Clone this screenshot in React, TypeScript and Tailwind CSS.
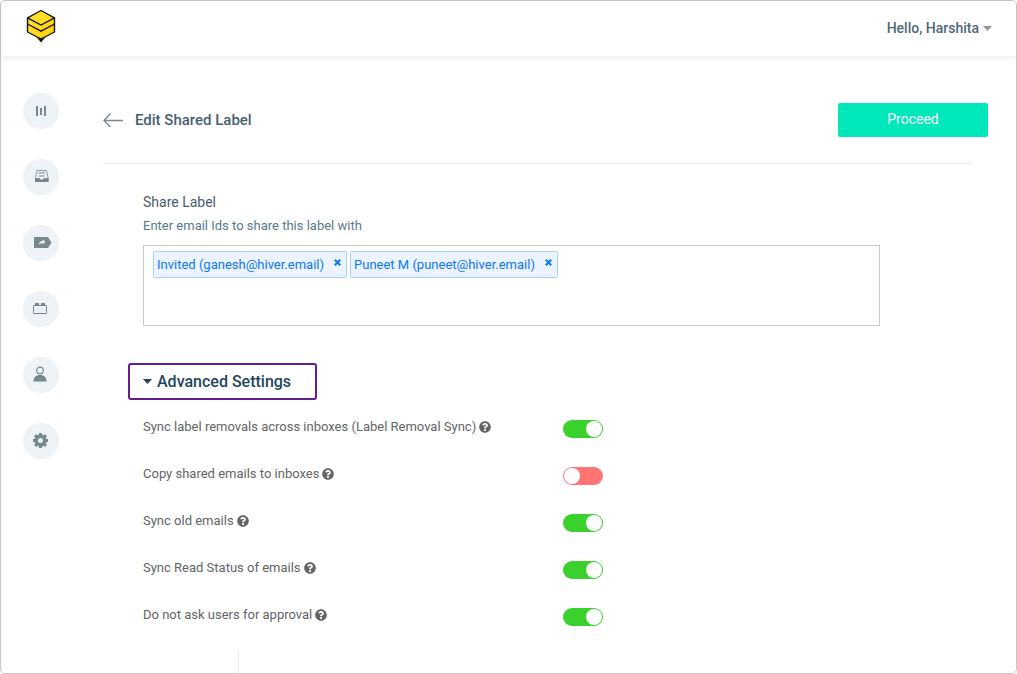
import { useState } from "react";
import type { ReactNode } from "react";
import { FaQuestionCircle } from "react-icons/fa";

const NAV: { label: string; icon: ReactNode }[] = [
  {
    label: "Analytics",
    icon: (
      <path d="M3 4h2v10H3zM7 6h2v7H7zM11 4h2v10h-2z" />
    ),
  },
  {
    label: "Shared mailboxes",
    icon: (
      <>
        <path d="M4 2.500h9.500l1.500 7v4H2.500v-4z" fill="none" stroke="currentColor" strokeWidth="0.800" />
        <path d="M2 10h4.500l1 1.500h2.500l1-1.500h4.500v4H2z" />
        <path d="M5.500 4.500h6.500v1H5.500zM6 7.500h5.500v1H6z" />
      </>
    ),
  },
  {
    label: "Shared labels",
    icon: (
      <>
        <path d="M1 3h14l3.500 5.500L15 14H1z" />
        <path d="M6 11c0-3 1.500-4 3.500-4V5.500L12.500 8l-3 2.500V9C8 9 7 9.500 6 11z" fill="#edf3f6" />
      </>
    ),
  },
  {
    label: "Integrations",
    icon: (
      <>
        <rect x="0.500" y="5.500" width="13" height="8" rx="0.500" fill="none" stroke="currentColor" />
        <path d="M2 3h4v2.500H2zM8 3h4v2.500H8z" />
      </>
    ),
  },
  {
    label: "Users",
    icon: (
      <>
        <circle cx="7" cy="4.500" r="3.300" fill="none" stroke="currentColor" strokeWidth="1.200" />
        <path d="M.5 15.500c0-4 2.500-6.500 6.500-6.500s6.500 2.500 6.500 6.500z" />
      </>
    ),
  },
  {
    label: "Settings",
    icon: (
      <path
        fillRule="evenodd"
        d="M6.100 1h2.800l.4 1.900 1 .4L12 2.200l1.900 1.900-1.100 1.700.4 1 1.800.3v2.800l-1.800.4-.4 1 1.100 1.600-1.900 2-1.700-1.100-1 .4-.4 1.800H6.100l-.4-1.800-1-.4L3 14.900l-1.900-2 1.100-1.600-.4-1L0 9.900V7.100l1.800-.3.4-1L1.100 4.100 3 2.200l1.700 1.100 1-.4zM7.500 6a2.500 2.500 0 1 0 0 5 2.500 2.500 0 0 0 0-5z"
      />
    ),
  },
];

const SETTINGS = [
  { id: "removal", label: "Sync label removals across inboxes (Label Removal Sync)", on: true },
  { id: "copy", label: "Copy shared emails to inboxes", on: false },
  { id: "old", label: "Sync old emails", on: true },
  { id: "read", label: "Sync Read Status of emails", on: true },
  { id: "approval", label: "Do not ask users for approval", on: true },
];

function Logo() {
  return (
    <svg width="30" height="34" viewBox="0 0 30 34">
      <defs>
        <linearGradient id="honey" x1="0" y1="0" x2="1" y2="1">
          <stop offset="0" stopColor="#ffe53b" />
          <stop offset="1" stopColor="#ffd000" />
        </linearGradient>
      </defs>
      <path d="M10 27.500l5 6 5-6z" fill="#151515" />
      <path
        d="M15 1.500l13.500 7.300v14.200L15 30 1.500 23V8.800z"
        fill="url(#honey)"
        stroke="#151515"
        strokeWidth="1.400"
        strokeLinejoin="round"
      />
      <path
        d="M1.500 8.800L15 16l13.500-7.200M1.500 15L15 22.200l13.500-7.200"
        fill="none"
        stroke="#151515"
        strokeWidth="1.400"
      />
    </svg>
  );
}

function Caret({ className }: { className?: string }) {
  return (
    <svg width="9" height="5" viewBox="0 0 9 5" fill="currentColor" className={className}>
      <path d="M0 0h9L4.500 5z" />
    </svg>
  );
}

function Header() {
  return (
    <header className="flex h-[55px] items-center justify-between pb-0.5 pl-[25px] pr-6 shadow-[0_2px_6px_rgba(0,0,0,0.08)]">
      <a href="#" aria-label="Home" className="mb-1">
        <Logo />
      </a>
      <button className="flex items-center gap-1 text-sm font-medium text-[#4f6878]">
        Hello, Harshita
        <Caret className="mt-0.5 text-[#90979b]" />
      </button>
    </header>
  );
}

function Sidebar() {
  return (
    <nav className="flex flex-col gap-[30px] pl-[22px] pt-[37px]">
      {NAV.map((item) => (
        <a
          key={item.label}
          href="#"
          aria-label={item.label}
          className="flex size-9 items-center justify-center rounded-full bg-[#edf3f6] text-[#78888f]"
        >
          <svg width="16" height="16" viewBox="0 1 16 16" fill="currentColor" className="overflow-visible">
            {item.icon}
          </svg>
        </a>
      ))}
    </nav>
  );
}

function Chip({ text, onRemove }: { text: string; onRemove: () => void }) {
  return (
    <span className="flex h-[27px] items-center rounded-xs border border-[#a9d0fb] bg-[#ebf3ff] px-[3px] text-[13px] text-[#0b78f5]">
      {text}
      <button aria-label={`Remove ${text}`} onClick={onRemove} className="mb-1 ml-[10px] mr-[2px]">
        <svg width="7" height="7" viewBox="0 0 7 7" stroke="currentColor" strokeWidth="2">
          <path d="M.8.8l5.400 5.400M6.200.8L.8 6.200" />
        </svg>
      </button>
    </span>
  );
}

function Toggle({ id, on }: { id: string; on: boolean }) {
  return (
    <input
      id={id}
      type="checkbox"
      role="switch"
      defaultChecked={on}
      className="flex h-[18px] w-10 appearance-none items-center rounded-full bg-[#ff7574] px-px before:size-4 before:rounded-full before:bg-white checked:justify-end checked:bg-[#3bd12d]"
    />
  );
}

export default function App() {
  const [emails, setEmails] = useState([
    "Invited (ganesh@hiver.email)",
    "Puneet M (puneet@hiver.email)",
  ]);
  const [open, setOpen] = useState(true);

  return (
    <div className="flex min-h-screen flex-col rounded-[5px] border border-[#c8c8c8] bg-white font-[Roboto,sans-serif]">
      <Header />
      <div className="flex flex-1">
        <Sidebar />
        <main className="ml-11 mr-7 flex flex-1 flex-col pt-[47px]">
          <div className="flex items-center justify-between">
            <div className="flex items-center gap-3">
              <a href="#" aria-label="Back" className="text-[#7a868c]">
                <svg width="20" height="14" viewBox="0 0 20 14" fill="none" stroke="currentColor" strokeWidth="1.300">
                  <path d="M7.500.5L1 7.500l6.500 6.500M1 7.500h19" />
                </svg>
              </a>
              <h1 className="text-[15px] font-medium text-[#47606f]">Edit Shared Label</h1>
            </div>
            <button className="h-[34px] w-[150px] rounded-xs bg-[#00e8b9] pb-0.5 text-sm text-white">Proceed</button>
          </div>
          <hr className="mr-4 mt-[26px] border-[#ebebeb]" />

          <section className="ml-10 mr-[108px] mt-7">
            <h2 className="text-sm leading-5 text-[#47606f]">Share Label</h2>
            <label htmlFor="emails" className="mt-1 block text-[13px] leading-5 text-[#58798c]">
              Enter email Ids to share this label with
            </label>
            <div className="mt-[9px] flex min-h-[81px] flex-wrap content-start gap-[3px] border border-[#c9c9c9] px-[9px] py-[5px]">
              {emails.map((email) => (
                <Chip key={email} text={email} onRemove={() => setEmails(emails.filter((e) => e !== email))} />
              ))}
              <input id="emails" type="text" className="h-[27px] min-w-0 flex-1 text-sm outline-none" />
            </div>
          </section>

          <section className="mt-[37px]">
            <button
              aria-expanded={open}
              onClick={() => setOpen(!open)}
              className="ml-[25px] flex h-[37px] w-[189px] items-center gap-[5px] rounded-[3px] border-2 border-[#651d90] pl-[13px] text-base font-medium text-[#22465a]"
            >
              <Caret />
              Advanced Settings
            </button>
            {open && (
              <div className="ml-10 mt-[5px]">
                {SETTINGS.map((s) => (
                  <div key={s.id} className="grid h-[47px] grid-cols-[420px_40px] items-center">
                    <label htmlFor={s.id} className="flex items-center gap-[3px] pb-1 text-[13px] text-[#626567]">
                      {s.label}
                      <FaQuestionCircle size={12} />
                    </label>
                    <Toggle id={s.id} on={s.on} />
                  </div>
                ))}
              </div>
            )}
          </section>
          <div className="ml-[135px] mt-[10px] w-px flex-1 bg-[#ebebeb]" />
        </main>
      </div>
    </div>
  );
}
